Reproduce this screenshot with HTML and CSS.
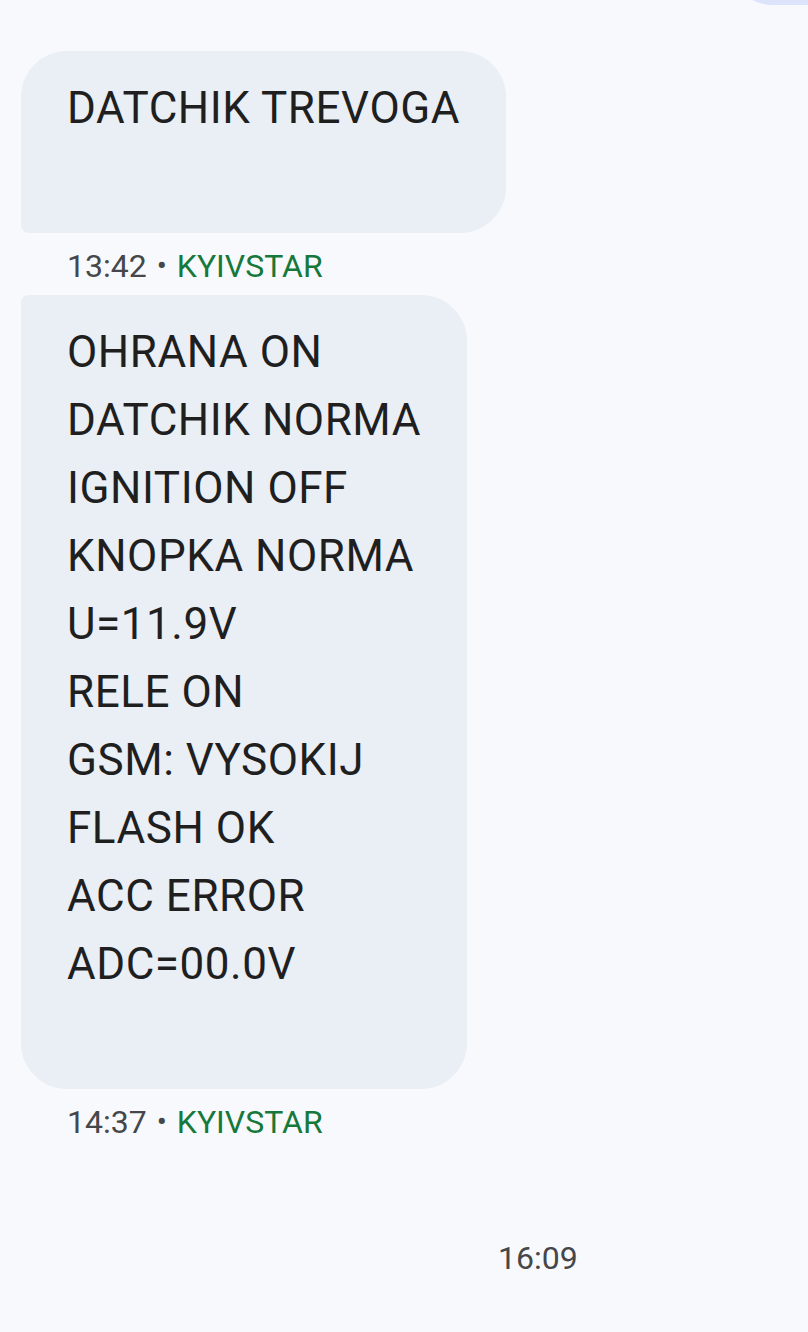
FILE: index.html
```html
<!DOCTYPE html>
<html lang="en">
<head>
<meta charset="utf-8">
<title>Messages</title>
<link rel="stylesheet" href="styles.css">
</head>
<body>
<div class="thread">
  <div class="sent-tail"></div>
  <div class="msg msg-first">
    <div class="bubble bubble-top">DATCHIK TREVOGA<br>&nbsp;</div>
    <div class="meta"><span class="time">13:42</span><span class="dot">•</span><span class="sim">KYIVSTAR</span></div>
  </div>
  <div class="msg">
    <div class="bubble bubble-bottom">OHRANA ON<br>DATCHIK NORMA<br>IGNITION OFF<br>KNOPKA NORMA<br>U=11.9V<br>RELE ON<br>GSM: VYSOKIJ<br>FLASH OK<br>ACC ERROR<br>ADC=00.0V<br>&nbsp;</div>
    <div class="meta"><span class="time">14:37</span><span class="dot">•</span><span class="sim">KYIVSTAR</span></div>
  </div>
  <div class="day-time">16:09</div>
</div>
</body>
</html>
```
FILE: styles.css
```css
html, body {
  margin: 0;
  padding: 0;
  background: #f7f9fd;
}
body {
  width: 808px;
  height: 1332px;
  overflow: hidden;
  font-family: Roboto, "Noto Sans", sans-serif;
  color: #1f1f1f;
}
.thread {
  position: relative;
  padding: 51px 0 0 21px;
}
.sent-tail {
  position: absolute;
  top: -40px;
  right: -40px;
  width: 120px;
  height: 45px;
  border-radius: 0 0 0 46px;
  background: #dde3fb;
}
.msg {
  display: flex;
  flex-direction: column;
  align-items: flex-start;
}
.bubble {
  background: #eaeef5;
  font-size: 44px;
  line-height: 68px;
  letter-spacing: 0.55px;
  padding: 23px 46px;
  white-space: nowrap;
}
.bubble-top {
  border-radius: 46px 46px 46px 8px;
}
.bubble-bottom {
  border-radius: 8px 46px 46px 46px;
}
.meta {
  font-size: 32px;
  line-height: 40px;
  padding: 13px 0 9px 46px;
  color: #45474a;
}
.dot {
  margin: 0 10px;
  font-size: 30px;
  vertical-align: 1px;
}
.sim {
  color: #16783a;
}
.day-time {
  margin: 87px 0 0 477px;
  font-size: 32px;
  line-height: 40px;
  color: #45474a;
}
```
